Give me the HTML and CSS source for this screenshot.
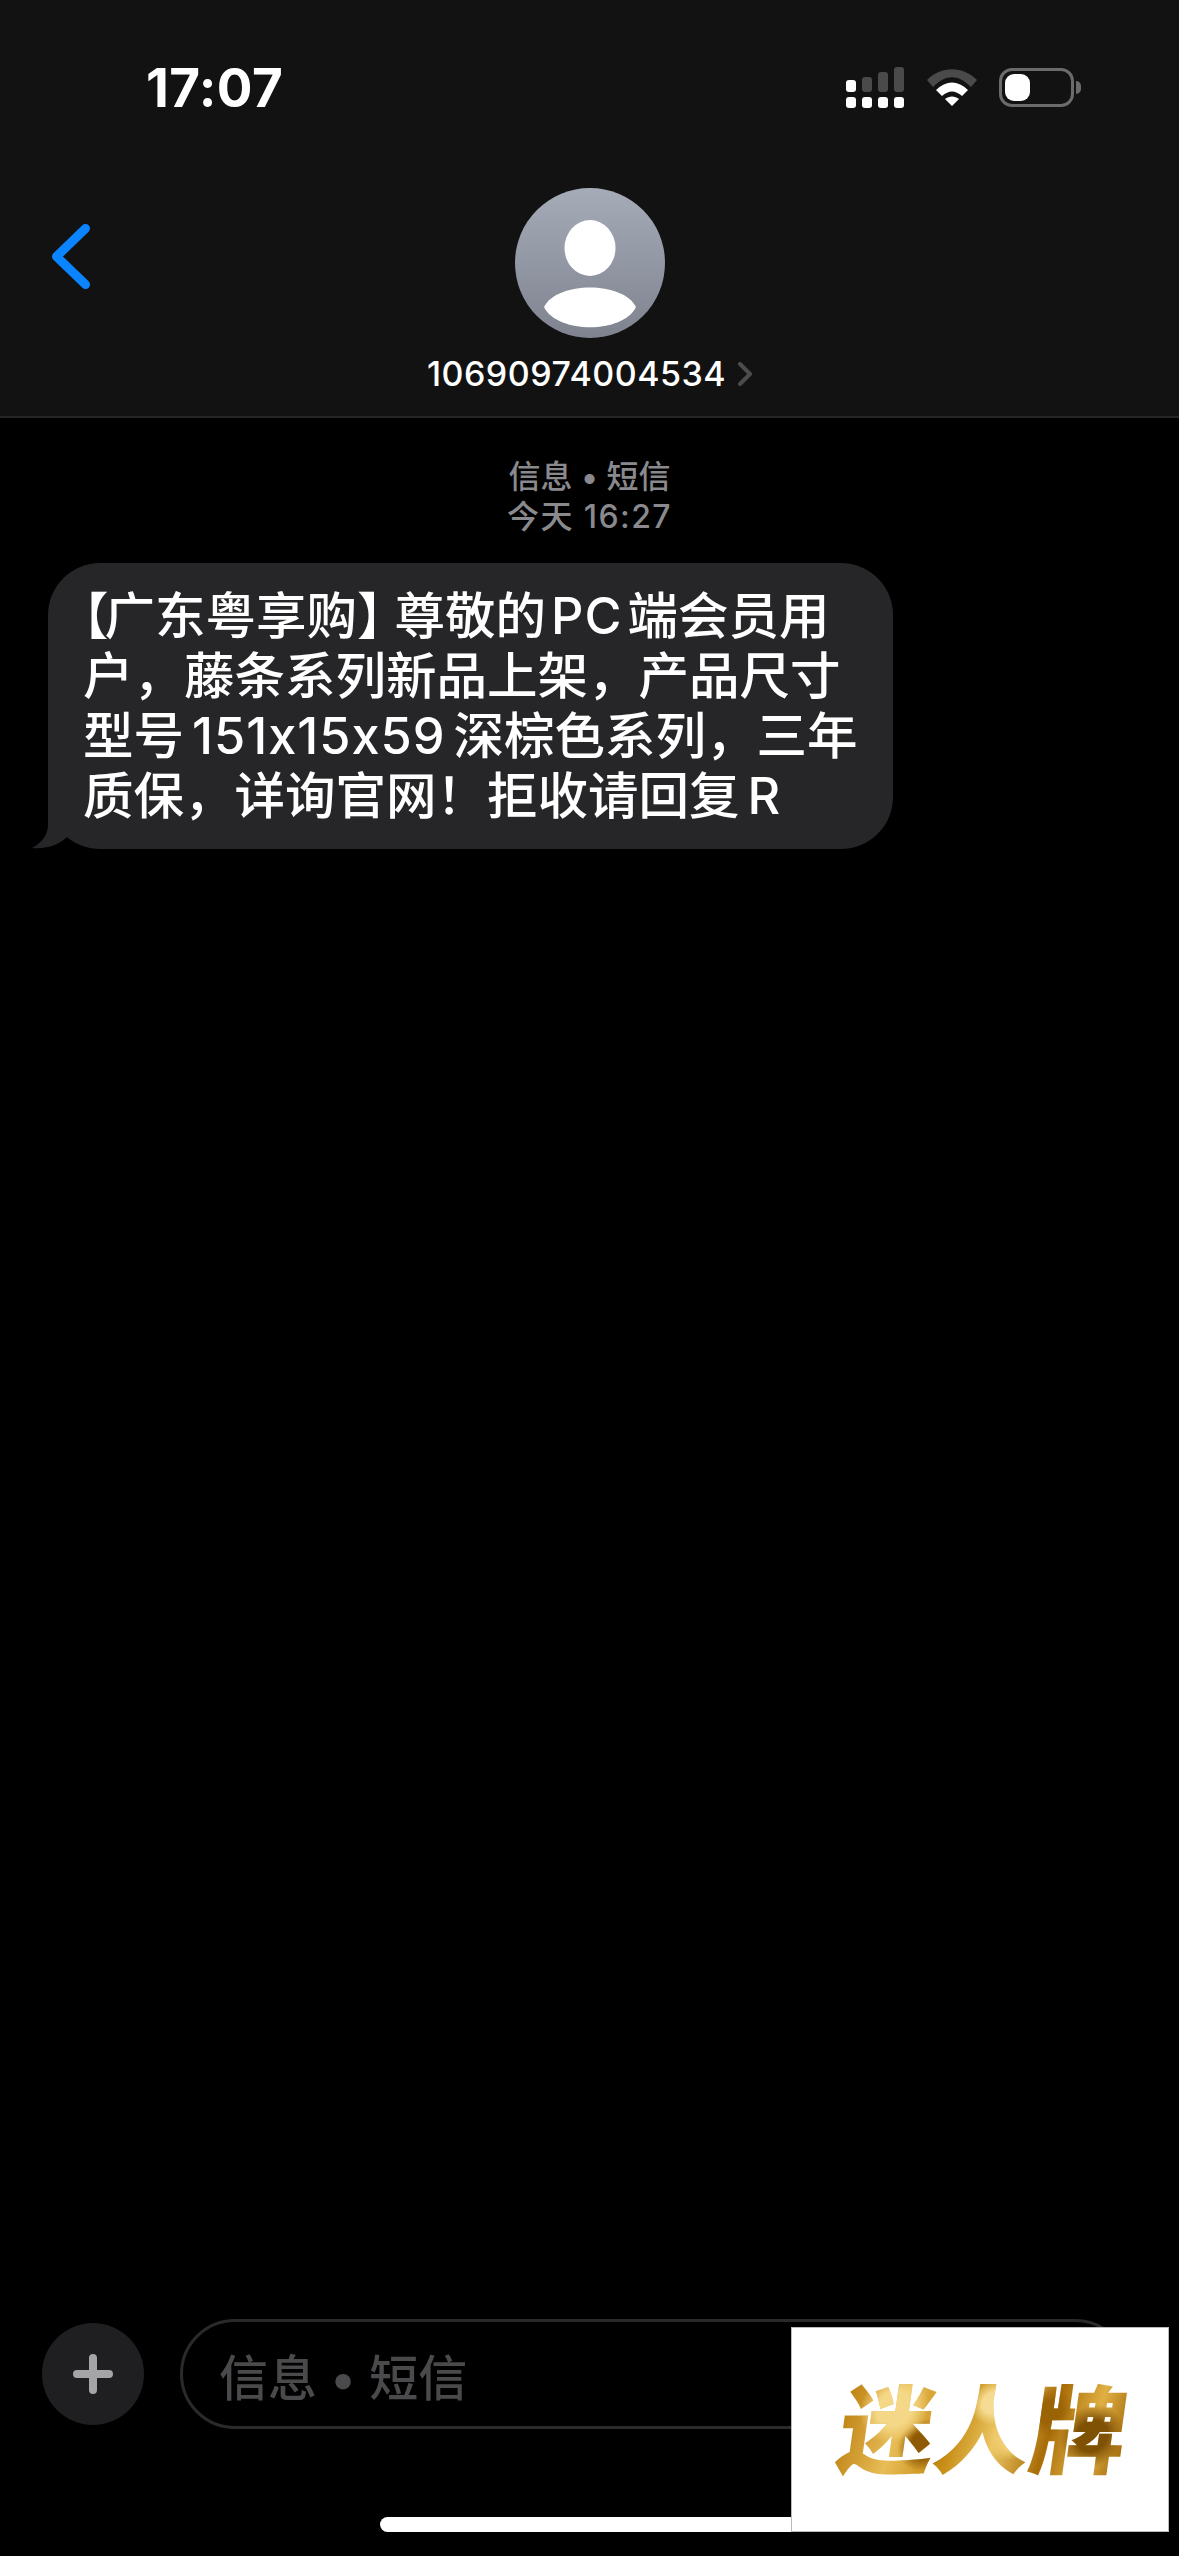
FILE: index.html
```html
<!DOCTYPE html>
<html lang="zh-CN">
<head>
<meta charset="utf-8">
<title>信息</title>
<link rel="stylesheet" href="styles.css">
</head>
<body>
<div class="screen">
  <header class="head">
    <div class="status">
      <span class="time">17:07</span>
      <div class="status-icons">
        <svg class="signal" width="58" height="41" viewBox="0 0 58 41">
          <g fill="#4a4a4a"><rect x="16" y="10" width="10" height="15" rx="3"/><rect x="32" y="5" width="10" height="20" rx="3"/><rect x="48" y="0" width="10" height="25" rx="3"/></g>
          <g fill="#fff"><rect x="0" y="13" width="10" height="12" rx="3"/><rect x="0" y="30" width="10" height="11" rx="3"/><rect x="16" y="30" width="10" height="11" rx="3"/><rect x="32" y="30" width="10" height="11" rx="3"/><rect x="48" y="30" width="10" height="11" rx="3"/></g>
        </svg>
        <svg class="wifi" width="50" height="37" viewBox="0 0 50 37">
          <path d="M0 11 C14 -3.500 36 -3.500 50 11 L44 18 C31 5 19 5 6 18Z" fill="#4a4a4a"/>
          <path d="M9 21 C19 11 31 11 41 21 L35 27 C28 21 22 21 15 27Z" fill="#fff"/>
          <path d="M18 30 C22 26.500 28 26.500 32 30 L25 37Z" fill="#fff"/>
        </svg>
        <div class="battery"><div class="level"></div></div>
        <div class="nub"></div>
      </div>
    </div>
    <div class="nav">
      <svg class="back" width="38" height="65" viewBox="0 0 38 65"><path d="M33.500 4.500 L4.500 32.500 L33.500 60.500" fill="none" stroke="#0a84ff" stroke-width="9" stroke-linecap="round" stroke-linejoin="round"/></svg>
      <div class="contact">
        <svg class="avatar" width="150" height="150" viewBox="0 0 150 150">
          <defs><linearGradient id="ag" x1="0" y1="0" x2="0" y2="1"><stop offset="0" stop-color="#a6abb8"/><stop offset="1" stop-color="#7e838f"/></linearGradient></defs>
          <circle cx="75" cy="75" r="75" fill="url(#ag)"/>
          <ellipse cx="75" cy="60" rx="25.500" ry="28" fill="#fff"/>
          <path d="M29 119 C42 93 108 93 121 119 C108 146 42 146 29 119Z" fill="#fff"/>
        </svg>
        <div class="name-row">
          <span class="number">10690974004534</span>
          <svg width="14" height="24" viewBox="0 0 14 24"><path d="M2 2 L12 12 L2 22" fill="none" stroke="#4c4c4e" stroke-width="4" stroke-linecap="round" stroke-linejoin="round"/></svg>
        </div>
      </div>
    </div>
  </header>
  <main class="thread">
    <div class="stamp">信息 • 短信<br><span class="stamp-date">今天 16:27</span></div>
    <div class="bubble">
      <span class="open">【</span>广东粤享购<span class="close">】</span>尊敬的<span class="lat lat-tight">PC</span>端会员用<br>户，藤条系列新品上架，产品尺寸<br>型号<span class="lat">151x15x59</span>深棕色系列，三年<br>质保，详询官网！拒收请回复<span class="lat">R</span>
      <svg class="tail" width="40" height="52" viewBox="0 0 40 52"><path d="M16 0 L16 28 C16 37 10 46 0 51 C13 52 26 49 35 40 L35 20Z" fill="#262628"/></svg>
    </div>
  </main>
  <footer class="composer">
    <div class="plus"><svg width="40" height="40" viewBox="0 0 40 40"><path d="M20 4 V36 M4 20 H36" stroke="#a5a5a7" stroke-width="8" stroke-linecap="round"/></svg></div>
    <div class="field">信息 • 短信</div>
  </footer>
  <div class="home"></div>
  <div class="mark"><span class="mark-text">迷人牌</span></div>
</div>
</body>
</html>
```
FILE: styles.css
```css
* { box-sizing: border-box; }
html, body { margin: 0; background: #000; }
.screen {
  position: relative;
  width: 1179px;
  height: 2556px;
  overflow: hidden;
  display: flex;
  flex-direction: column;
  background: #000;
  color: #fff;
  font-family: Inter, "Noto Sans CJK SC", sans-serif;
  font-feature-settings: "calt" 0;
}
.head {
  height: 418px;
  background: #121212;
  border-bottom: 2px solid #262626;
  display: flex;
  flex-direction: column;
}
.status {
  height: 188px;
  padding: 59px 98px 0 146px;
  display: flex;
  justify-content: space-between;
  align-items: flex-start;
}
.time { font-size: 53px; font-weight: 700; line-height: 58px; letter-spacing: 0.4px; }
.status-icons { display: flex; align-items: center; padding-top: 8px; }
.wifi { margin-left: 23px; }
.battery {
  margin-left: 22px;
  width: 75px;
  height: 39px;
  border: 3px solid #6b6b6b;
  border-radius: 13px;
  padding: 3px;
}
.level { width: 25px; height: 100%; background: #fff; border-radius: 9px; }
.nub { width: 5px; height: 13px; margin-left: 2px; background: #6b6b6b; border-radius: 0 6px 6px 0; }
.nav { position: relative; display: flex; justify-content: center; }
.back { position: absolute; left: 52px; top: 36px; }
.contact { display: flex; flex-direction: column; align-items: center; }
.name-row { display: flex; align-items: center; gap: 12px; margin-top: 16px; }
.number { font-size: 34px; line-height: 40px; font-weight: 500; letter-spacing: 0.5px; }
.thread { flex: 1; display: flex; flex-direction: column; }
.stamp {
  margin-top: 39px;
  text-align: center;
  font-size: 32px;
  line-height: 40px;
  font-weight: 500;
  color: #8a8a8e;
}
.stamp-date { letter-spacing: 1.4px; }
.bubble {
  position: relative;
  margin: 26px 0 0 48px;
  width: 845px;
  height: 286px;
  padding: 23px 0 0 35px;
  border-radius: 52px;
  background: #262628;
  font-size: 50.500px;
  line-height: 60px;
  white-space: nowrap;
  font-weight: 500;
}
.open { margin-left: -25px; letter-spacing: -4px; }
.close { letter-spacing: -13px; }
.lat { margin: 0 8px; letter-spacing: 1px; }
.lat-tight { margin: 0 5px; }
.tail { position: absolute; left: -16px; bottom: 0; }
.composer {
  display: flex;
  align-items: center;
  gap: 36px;
  padding: 0 49px 0 42px;
  height: 110px;
}
.plus {
  width: 102px;
  height: 102px;
  border-radius: 50%;
  background: #1f1f21;
  display: flex;
  align-items: center;
  justify-content: center;
}
.field {
  flex: 1;
  height: 110px;
  border: 3px solid #2a2a2c;
  border-radius: 55px;
  padding-left: 36px;
  display: flex;
  align-items: center;
  font-size: 49px;
  color: #4a4a4c;
  font-weight: 500;
}
.home {
  width: 420px;
  height: 15px;
  margin: 88px 0 24px 380px;
  border-radius: 8px;
  background: #fff;
}
.mark {
  position: absolute;
  left: 791px;
  top: 2327px;
  width: 378px;
  height: 205px;
  background: #fff;
  border: 1px solid #bbb;
  display: flex;
  align-items: center;
  justify-content: center;
}
.mark-text {
  font-family: "Noto Sans CJK SC", sans-serif;
  font-size: 96px;
  line-height: 110px;
  font-weight: 900;
  background:
    radial-gradient(circle at 18% 35%, #f4d887 0 7%, transparent 14%),
    radial-gradient(circle at 30% 68%, #8f5a05 0 6%, transparent 12%),
    radial-gradient(circle at 52% 30%, #f6dc92 0 6%, transparent 13%),
    radial-gradient(circle at 60% 62%, #f1cd70 0 6%, transparent 12%),
    radial-gradient(circle at 72% 38%, #9a6306 0 5%, transparent 11%),
    radial-gradient(circle at 88% 60%, #7f5105 0 6%, transparent 12%),
    linear-gradient(100deg, #b97a0a 0%, #e8bd57 22%, #c58a12 40%, #ecc765 55%, #a96d08 72%, #e0b044 86%, #9b6306 100%);
  -webkit-background-clip: text;
  background-clip: text;
  color: transparent;
  transform: translate(4px, -5px) skewX(-8deg);
}
```
